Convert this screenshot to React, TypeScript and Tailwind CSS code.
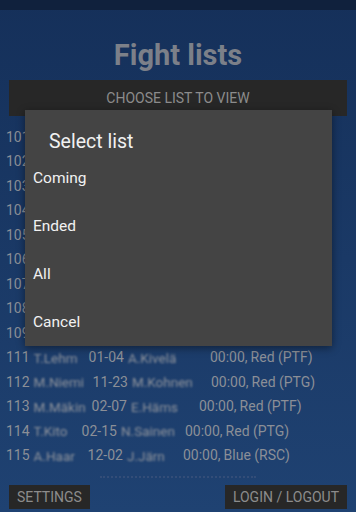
type Fight = {
  no: number;
  a: string;
  aw: number;
  date: string;
  b: string;
  bw: number;
  corner: string;
};

const fights: Fight[] = [
  { no: 101, a: "J.Virta", aw: 52, date: "03-11", b: "K.Salonen", bw: 66, corner: "Red (PTF)" },
  { no: 102, a: "P.Laine", aw: 48, date: "10-02", b: "R.Heikki", bw: 70, corner: "Blue (PTG)" },
  { no: 103, a: "S.Koski", aw: 50, date: "05-19", b: "T.Niemi", bw: 60, corner: "Red (PTF)" },
  { no: 104, a: "L.Mäki", aw: 46, date: "08-30", b: "V.Lahti", bw: 62, corner: "Red (PTG)" },
  { no: 105, a: "H.Aalto", aw: 50, date: "01-21", b: "O.Lind", bw: 58, corner: "Blue (RSC)" },
  { no: 106, a: "E.Kallio", aw: 54, date: "06-06", b: "A.Hiltu", bw: 64, corner: "Red (PTF)" },
  { no: 107, a: "M.Rant", aw: 50, date: "09-14", b: "J.Rinne", bw: 60, corner: "Red (PTG)" },
  { no: 108, a: "K.Leino", aw: 52, date: "04-27", b: "P.Vainio", bw: 62, corner: "Blue (PTF)" },
  { no: 109, a: "T.Haka", aw: 52, date: "12-09", b: "S.Laiti", bw: 66, corner: "Red (PTF)" },
  { no: 111, a: "T.Lehm", aw: 51, date: "01-04", b: "A.Kivelä", bw: 78, corner: "Red (PTF)" },
  { no: 112, a: "M.Niemi", aw: 55, date: "11-23", b: "M.Kohnen", bw: 75, corner: "Red (PTG)" },
  { no: 113, a: "M.Mäkin", aw: 54, date: "02-07", b: "E.Häms", bw: 64, corner: "Red (PTF)" },
  { no: 114, a: "T.Kito", aw: 44, date: "02-15", b: "N.Sainen", bw: 60, corner: "Red (PTG)" },
  { no: 115, a: "A.Haar", aw: 50, date: "12-02", b: "J.Järn", bw: 52, corner: "Blue (RSC)" },
];

const options = ["Coming", "Ended", "All", "Cancel"];

function Blurred({ text, w }: { text: string; w: number }) {
  return (
    <span
      className="inline-block overflow-hidden whitespace-nowrap text-[13.5px] text-[#8e939c] [filter:blur(0.9px)]"
      style={{ width: w }}
    >
      {text}
    </span>
  );
}

export default function App() {
  return (
    <div
      className="relative h-[512px] w-[356px] overflow-hidden bg-gradient-to-b from-[#15305a] to-[#1f4272] text-[#8b8f97]"
      style={{ fontFamily: "Roboto, 'Liberation Sans', sans-serif" }}
    >
      <div className="h-[10px] bg-[#10213d]" />

      <h1 className="mt-[28px] h-[34px] text-center text-[29px] font-bold leading-[34px] text-[#7c8089]">
        Fight lists
      </h1>

      <div className="mx-[9px] mt-[8px] flex h-[36px] items-center justify-center bg-[#272727] text-[14px] text-[#8c8c8c]">
        CHOOSE LIST TO VIEW
      </div>

      <ul className="mt-[9px]">
        {fights.map((f) => (
          <li
            key={f.no}
            className="flex h-[24.5px] items-center gap-[4px] whitespace-nowrap px-[6px] text-[14px]"
          >
            <span>{f.no}</span>
            <Blurred text={f.a} w={f.aw} />
            <span>{f.date}</span>
            <Blurred text={f.b} w={f.bw} />
            <span>00:00,</span>
            <span className="-ml-[1px]">{f.corner}</span>
          </li>
        ))}
      </ul>

      <div className="mx-[100px] mt-[8px] border-t-2 border-dotted border-[#334d78]" />

      <div className="mt-[7px] flex items-center justify-between px-[9px]">
        <button className="h-[24px] bg-[#272727] px-[8px] text-[14px] text-[#8c8c8c]">
          SETTINGS
        </button>
        <button className="h-[24px] bg-[#272727] px-[8px] text-[14px] text-[#8c8c8c]">
          LOGIN / LOGOUT
        </button>
      </div>

      <div
        role="dialog"
        aria-modal="true"
        className="absolute left-[25px] top-[110px] w-[307px] bg-[#444444] pt-[20px] shadow-[0_2px_8px_rgba(0,0,0,0.45)]"
      >
        <h3 className="h-[24px] pl-[24px] text-[19.5px] leading-[24px] text-[#f1f1f1]">
          Select list
        </h3>
        <div className="mt-[1px]">
          {options.map((o) => (
            <div
              key={o}
              className="flex h-[47.75px] items-center pl-[8px] text-[15.5px] text-[#f1f1f1]"
            >
              {o}
            </div>
          ))}
        </div>
      </div>
    </div>
  );
}
